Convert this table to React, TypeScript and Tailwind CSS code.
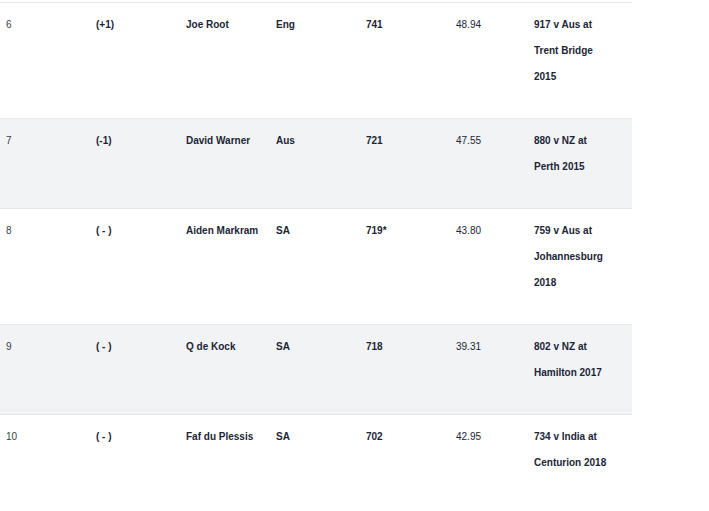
import React from "react";

type Row = {
  pos: string;
  move: string;
  name: string;
  team: string;
  rating: string;
  avg: string;
  best: string;
};

const rows: Row[] = [
  { pos: "6", move: "(+1)", name: "Joe Root", team: "Eng", rating: "741", avg: "48.94", best: "917 v Aus at Trent Bridge 2015" },
  { pos: "7", move: "(-1)", name: "David Warner", team: "Aus", rating: "721", avg: "47.55", best: "880 v NZ at Perth 2015" },
  { pos: "8", move: "( - )", name: "Aiden Markram", team: "SA", rating: "719*", avg: "43.80", best: "759 v Aus at Johannesburg 2018" },
  { pos: "9", move: "( - )", name: "Q de Kock", team: "SA", rating: "718", avg: "39.31", best: "802 v NZ at Hamilton 2017" },
  { pos: "10", move: "( - )", name: "Faf du Plessis", team: "SA", rating: "702", avg: "42.95", best: "734 v India at Centurion 2018" },
];

const App = () => {
  return (
    <div className="min-h-[511px] bg-white pt-[2px] font-['Liberation_Sans',Arial,sans-serif] text-[10px] leading-[26px] text-[#1c2536]">
      <div className="w-[632px]">
        {rows.map((r, i) => (
          <div
            key={r.pos}
            className={`grid grid-cols-[90px_90px_90px_90px_90px_78px_104px] border-t border-[#e6e8eb] pt-[9px] pb-[28px] ${
              i % 2 === 1 ? "bg-[#f2f3f5]" : "bg-white"
            }`}
          >
            <div className="pl-[6px] text-[#3a3f48]">{r.pos}</div>
            <div className="pl-[6px] font-bold">{r.move}</div>
            <div className="pl-[6px] font-bold">{r.name}</div>
            <div className="pl-[6px] font-bold">{r.team}</div>
            <div className="pl-[6px] font-bold">{r.rating}</div>
            <div className="pl-[6px]">{r.avg}</div>
            <div className="pl-[6px] pr-[22px] font-bold">{r.best}</div>
          </div>
        ))}
      </div>
    </div>
  );
};

export default App;
